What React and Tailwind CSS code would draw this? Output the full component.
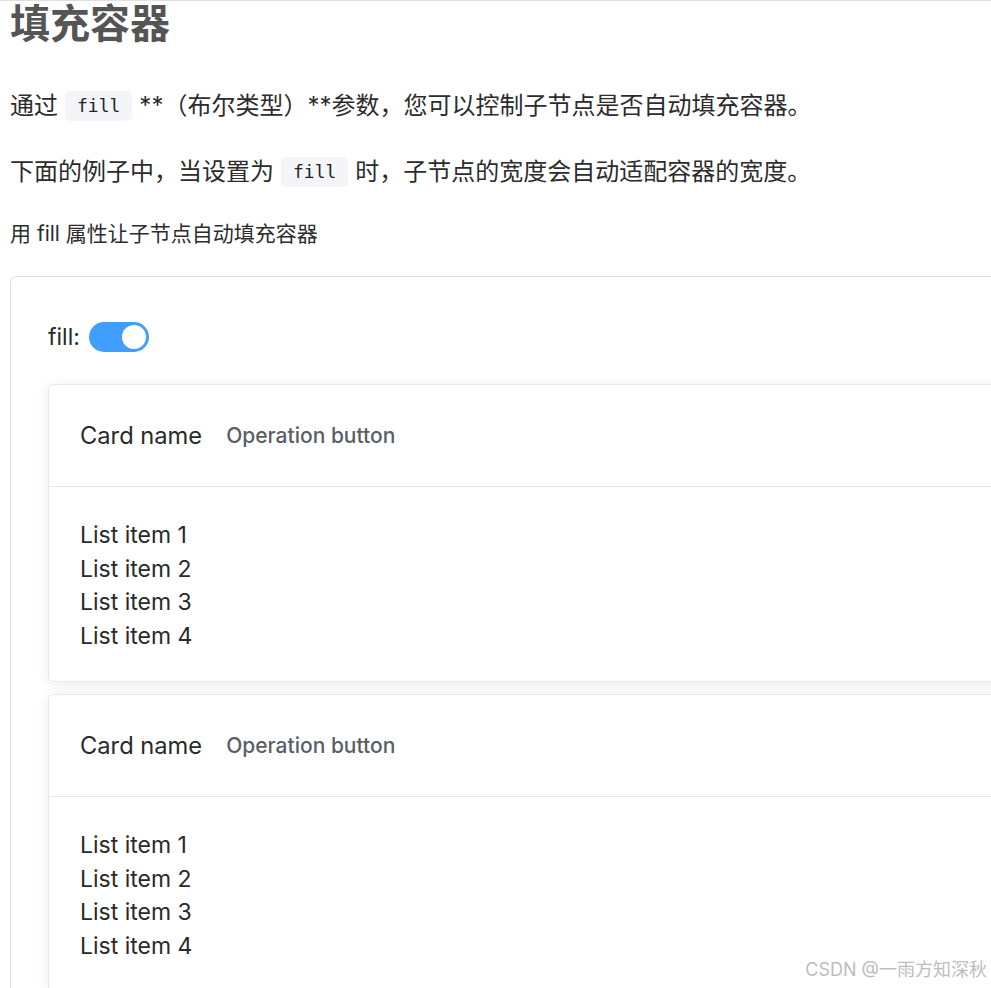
import { useState } from 'react';

const cjk = { fontFamily: '"Inter", "Noto Sans CJK SC", sans-serif' };

function Code({ children }) {
  return (
    <code className="mx-[7px] inline-flex h-[30px] items-center rounded-[5px] bg-[#f4f5f8] px-[12px] align-middle font-['DejaVu_Sans_Mono',monospace] text-[18px] text-[#222]">
      {children}
    </code>
  );
}

function DemoCard() {
  return (
    <div className="rounded-[6px] border border-[#e4e7ed] bg-white shadow-[0_2px_14px_rgba(0,0,0,0.08)]">
      <div className="flex h-[102px] items-center border-b border-[#e4e7ed] px-[31px]">
        <span className="text-[23.7px] text-[#2a2a2a]">Card name</span>
        <span className="ml-[24px] text-[21px] font-medium text-[#5a5e66]">Operation button</span>
      </div>
      <div className="px-[31px] pb-[28px] pt-[32px] text-[23px] leading-[33.5px] text-[#2a2a2a]">
        <div>List item 1</div>
        <div>List item 2</div>
        <div>List item 3</div>
        <div>List item 4</div>
      </div>
    </div>
  );
}

export default function App() {
  const [fill, setFill] = useState(true);

  return (
    <div className="relative h-[988px] w-[991px] overflow-hidden border-t border-[#e0e0e0] bg-white" style={cjk}>
      <div className="pl-[10px]">
        <h1 className="mt-[-1px] text-[40px] font-bold leading-[48px] text-[#555]">填充容器</h1>

        <p className="mt-[42px] flex items-center text-[24px] leading-[32px] text-[#2c2c2c]">
          通过<Code>fill</Code>**（布尔类型）**参数，您可以控制子节点是否自动填充容器。
        </p>
        <p className="mt-[34px] flex items-center text-[24px] leading-[32px] text-[#2c2c2c]">
          下面的例子中，当设置为<Code>fill</Code>时，子节点的宽度会自动适配容器的宽度。
        </p>

        <p className="mt-[32px] text-[21px] leading-[28px] text-[#2c2c2c]">用 fill 属性让子节点自动填充容器</p>

        <div className="mt-[28px] w-[1100px] rounded-[6px] border border-[#dcdfe6] pb-[20px] pl-[37px] pr-[37px] pt-[45px]">
          <div className="flex h-[30px] items-center">
            <span className="text-[23px] text-[#2a2a2a]">fill:</span>
            <button
              onClick={() => setFill(!fill)}
              className={`ml-[9px] flex h-[30px] w-[60px] items-center rounded-full px-[3px] ${fill ? 'justify-end bg-[#409eff]' : 'justify-start bg-[#dcdfe6]'}`}
            >
              <span className="block h-[24px] w-[24px] rounded-full bg-white" />
            </button>
          </div>

          <div className={`mt-[32px] flex flex-col gap-[12px] ${fill ? 'w-full' : 'w-fit'}`}>
            <DemoCard />
            <DemoCard />
          </div>
        </div>
      </div>

      <span className="absolute bottom-[5px] right-[4px] text-[18px] text-[#bdbdbd]">CSDN @一雨方知深秋</span>
    </div>
  );
}
